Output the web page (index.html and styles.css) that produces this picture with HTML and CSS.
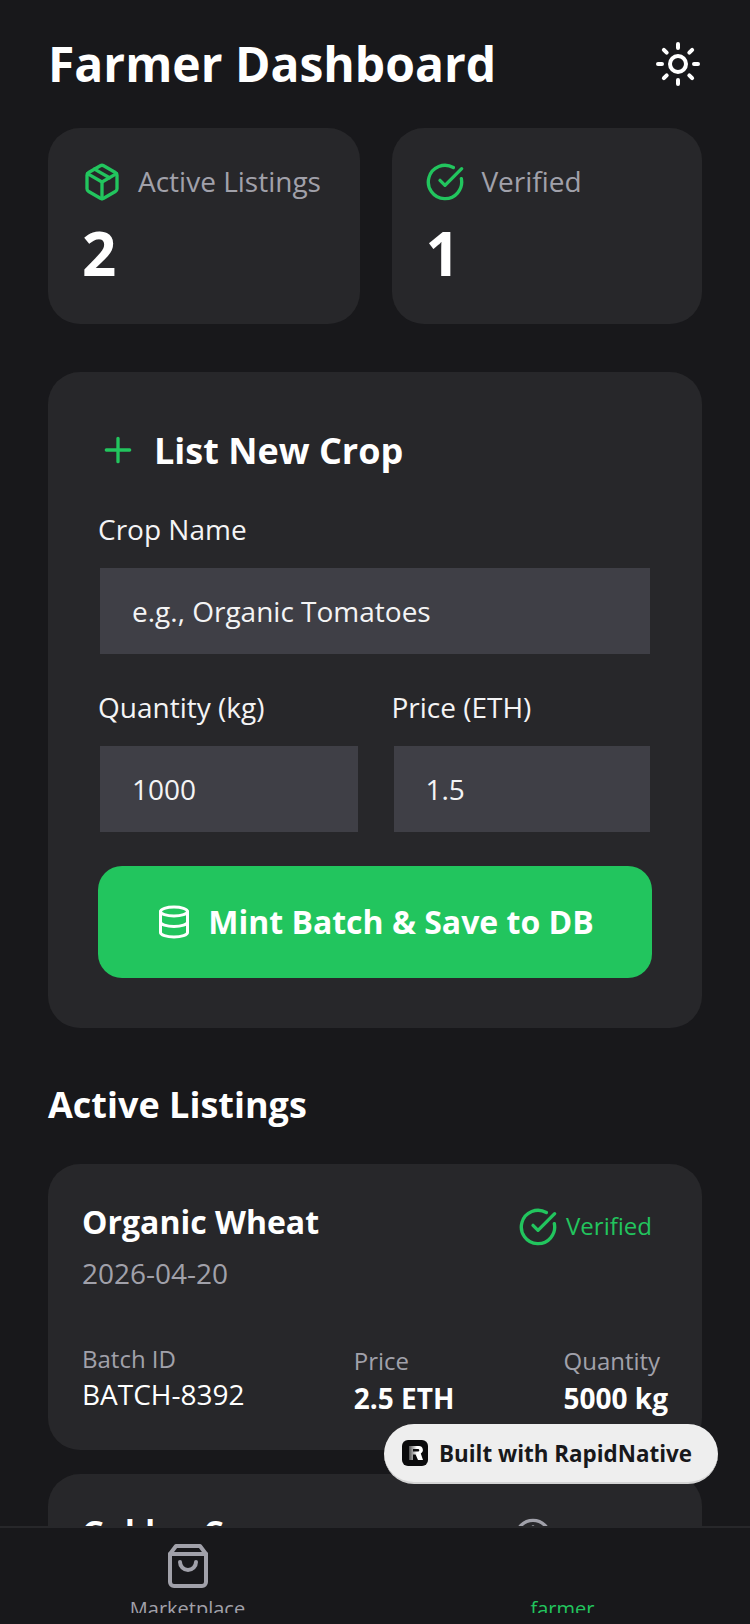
FILE: index.html
```html
<!DOCTYPE html>
<html lang="en">
<head>
<meta charset="utf-8">
<title>Farmer Dashboard</title>
<link rel="stylesheet" href="styles.css">
</head>
<body>
<div class="app">
  <main class="main">
    <header class="header">
      <h1 class="title">Farmer Dashboard</h1>
      <svg class="icon icon-48 stroke-white" viewBox="0 0 24 24"><circle cx="12" cy="12" r="4"/><path d="M12 2v2M12 20v2M4.93 4.93l1.41 1.41M17.66 17.66l1.41 1.41M2 12h2M20 12h2M6.34 17.66l-1.41 1.41M19.07 4.93l-1.41 1.41"/></svg>
    </header>

    <section class="stats">
      <div class="stat">
        <div class="stat-head">
          <svg class="icon icon-40 stroke-green" viewBox="0 0 24 24"><path d="M21 8a2 2 0 0 0-1-1.73l-7-4a2 2 0 0 0-2 0l-7 4A2 2 0 0 0 3 8v8a2 2 0 0 0 1 1.73l7 4a2 2 0 0 0 2 0l7-4A2 2 0 0 0 21 16Z"/><path d="M12 22V12"/><path d="m3.3 7 8.7 5 8.7-5"/><path d="m7.5 4.27 9 5.15"/></svg>
          <span class="stat-label">Active Listings</span>
        </div>
        <div class="stat-value">2</div>
      </div>
      <div class="stat">
        <div class="stat-head">
          <svg class="icon icon-40 stroke-green" viewBox="0 0 24 24"><path d="M21.8 10A10 10 0 1 1 17 3.34"/><path d="m9 11 3 3L22 4"/></svg>
          <span class="stat-label">Verified</span>
        </div>
        <div class="stat-value">1</div>
      </div>
    </section>

    <section class="form-card">
      <div class="form-head">
        <svg class="icon icon-40 stroke-green" viewBox="0 0 24 24"><path d="M5 12h14M12 5v14"/></svg>
        <h2 class="form-title">List New Crop</h2>
      </div>
      <label class="field">
        <span class="field-label">Crop Name</span>
        <input class="input" type="text" placeholder="e.g., Organic Tomatoes">
      </label>
      <div class="field-row">
        <label class="field">
          <span class="field-label">Quantity (kg)</span>
          <input class="input" type="text" value="1000">
        </label>
        <label class="field">
          <span class="field-label">Price (ETH)</span>
          <input class="input" type="text" value="1.5">
        </label>
      </div>
      <button class="submit" type="button">
        <svg class="icon icon-36 stroke-white" viewBox="0 0 24 24"><ellipse cx="12" cy="5" rx="9" ry="3"/><path d="M3 5v14a9 3 0 0 0 18 0V5"/><path d="M3 12a9 3 0 0 0 18 0"/></svg>
        <span class="submit-text">Mint Batch &amp; Save to DB</span>
      </button>
    </section>

    <h2 class="section-title">Active Listings</h2>

    <article class="listing">
      <div class="listing-head">
        <div>
          <h3 class="listing-name">Organic Wheat</h3>
          <p class="listing-date">2026-04-20</p>
        </div>
        <div class="badge badge-green">
          <svg class="icon icon-40 stroke-green" viewBox="0 0 24 24"><path d="M21.8 10A10 10 0 1 1 17 3.34"/><path d="m9 11 3 3L22 4"/></svg>
          <span class="badge-text">Verified</span>
        </div>
      </div>
      <div class="metrics">
        <div class="metric">
          <div class="metric-label">Batch ID</div>
          <div class="metric-id">BATCH-8392</div>
        </div>
        <div class="metric metric-low">
          <div class="metric-label">Price</div>
          <div class="metric-value">2.5 ETH</div>
        </div>
        <div class="metric metric-low">
          <div class="metric-label">Quantity</div>
          <div class="metric-value">5000 kg</div>
        </div>
      </div>
    </article>

    <article class="listing">
      <div class="listing-head">
        <div>
          <h3 class="listing-name">Golden Corn</h3>
          <p class="listing-date">2026-04-18</p>
        </div>
        <div class="badge badge-grey">
          <svg class="icon icon-40 stroke-grey" viewBox="0 0 24 24"><circle cx="12" cy="12" r="10"/><path d="M12 6v6l4 2"/></svg>
          <span class="badge-text">Pending</span>
        </div>
      </div>
    </article>
  </main>

  <nav class="tabbar">
    <div class="tab">
      <svg class="icon icon-48 stroke-grey" viewBox="0 0 24 24"><path d="M6 2 3 6v14a2 2 0 0 0 2 2h14a2 2 0 0 0 2-2V6l-3-4Z"/><path d="M3 6h18"/><path d="M16 10a4 4 0 0 1-8 0"/></svg>
      <span class="tab-label">Marketplace</span>
    </div>
    <div class="tab">
      <span class="tab-spacer"></span>
      <span class="tab-label tab-label-active">farmer</span>
    </div>
  </nav>

  <div class="built">
    <svg class="built-logo" viewBox="0 0 26 26"><defs><linearGradient id="rfade" gradientUnits="userSpaceOnUse" x1="6" y1="0" x2="15" y2="0"><stop offset="0" stop-color="#3a3a3a"/><stop offset="1" stop-color="#fff"/></linearGradient></defs><rect width="26" height="26" rx="6" fill="#0b0b0c"/><path d="M7 6h10a4 4 0 0 1 1.8 7.5L21 20h-5l-2.4-5.6H11v5.6H7Zm4 3v2.6h5a1.3 1.3 0 0 0 0-2.6Z" fill="url(#rfade)" fill-rule="evenodd"/></svg>
    <span>Built with RapidNative</span>
  </div>
</div>
</body>
</html>
```
FILE: styles.css
```css
* { box-sizing: border-box; }

html, body {
  margin: 0;
  padding: 0;
  background: #18181b;
}

body {
  font-family: "Open Sans", "Liberation Sans", sans-serif;
  color: #fff;
}

h1, h2, h3, p { margin: 0; }

.app {
  position: relative;
  display: flex;
  flex-direction: column;
  height: 100vh;
  overflow: hidden;
}

.main {
  flex: 1;
  min-height: 0;
  overflow: hidden;
  padding: 0 48px;
}

.icon {
  flex: none;
  display: block;
  fill: none;
  stroke-width: 2;
  stroke-linecap: round;
  stroke-linejoin: round;
}
.icon-48 { width: 48px; height: 48px; }
.icon-40 { width: 40px; height: 40px; }
.icon-36 { width: 36px; height: 36px; }
.stroke-white { stroke: #fff; }
.stroke-green { stroke: #22c55e; }
.stroke-grey { stroke: #a1a1aa; }

.header {
  display: flex;
  align-items: center;
  justify-content: space-between;
  height: 128px;
}
.title {
  font-size: 48px;
  line-height: 64px;
  font-weight: 700;
}

.stats {
  display: grid;
  grid-template-columns: 311.5fr 310.5fr;
  gap: 32px;
}
.stat {
  height: 196px;
  padding: 34px;
  background: #27272a;
  border-radius: 32px;
}
.stat + .stat { padding-left: 33.9px; }
.stat-head {
  display: flex;
  align-items: center;
  gap: 16px;
}
.stat-label {
  padding-bottom: 2px;
  font-size: 28px;
  line-height: 38px;
  color: #a1a1aa;
  white-space: nowrap;
}
.stat-value {
  margin-top: 15px;
  font-size: 60px;
  line-height: 72px;
  font-weight: 700;
}

.form-card {
  margin-top: 48px;
  padding: 50px;
  background: #27272a;
  border-radius: 32px;
}
.form-head {
  display: flex;
  align-items: center;
  gap: 16px;
  height: 56px;
}
.form-title {
  padding-top: 2px;
  font-size: 36px;
  line-height: 56px;
  font-weight: 700;
}
.field {
  display: block;
  margin-top: 32px;
}
.field-label {
  display: block;
  font-size: 28px;
  line-height: 38px;
  color: #f4f4f5;
}
.input {
  display: block;
  width: 100%;
  height: 90px;
  margin-top: 18px;
  padding: 0 32px;
  border: 2px solid #27272a;
  border-radius: 0;
  outline: none;
  background: #3f3f46;
  font-family: inherit;
  font-size: 28px;
  color: #f4f4f5;
}
.input::placeholder {
  color: #f4f4f5;
  opacity: 1;
}
.field-row {
  display: grid;
  grid-template-columns: 261.5fr 260.5fr;
  gap: 32px;
}
.field + .field .field-label { margin-left: -0.1px; }
.field + .field .input { padding-left: 31.9px; }
.submit {
  display: flex;
  align-items: center;
  justify-content: center;
  gap: 16px;
  width: 100%;
  height: 112px;
  margin-top: 32px;
  border: 0;
  border-radius: 24px;
  background: #22c55e;
  font-family: inherit;
  font-size: 32px;
  font-weight: 700;
  color: #fff;
}
.submit-text { padding-bottom: 2px; }

.section-title {
  margin: 51px 0 33px;
  font-size: 36px;
  line-height: 52px;
  font-weight: 700;
}

.listing {
  padding: 34px 34px 33px;
  margin-bottom: 24px;
  background: #27272a;
  border-radius: 32px;
}
.listing-head {
  display: flex;
  align-items: flex-start;
  justify-content: space-between;
}
.listing-name {
  padding-top: 2px;
  font-size: 32px;
  line-height: 44px;
  font-weight: 700;
}
.listing-date {
  margin-top: 10px;
  font-size: 28px;
  line-height: 38px;
  color: #a1a1aa;
}
.badge {
  display: flex;
  align-items: center;
  gap: 8px;
  padding: 8px 16px;
  font-size: 24px;
  line-height: 40px;
}
.badge-text { padding-bottom: 2px; }
.badge-green { color: #22c55e; }
.badge-grey { color: #a1a1aa; }

.metrics {
  display: flex;
  justify-content: space-between;
  margin-top: 50px;
}
.metric-low { margin-top: 2px; }
.metric-label {
  font-size: 24px;
  line-height: 33px;
  color: #a1a1aa;
}
.metric-id {
  font-size: 28px;
  line-height: 38px;
}
.metric-value {
  margin-top: 2px;
  font-size: 28px;
  line-height: 38px;
  font-weight: 700;
}

.tabbar {
  flex: none;
  display: grid;
  grid-template-columns: 1fr 1fr;
  height: 98px;
  background: #18181b;
  border-top: 2px solid #27272a;
}
.tab {
  display: flex;
  flex-direction: column;
  align-items: center;
  height: 85px;
  padding-top: 14px;
  overflow: hidden;
}
.tab-spacer {
  flex: none;
  height: 48px;
}
.tab-label {
  margin-top: 5px;
  font-size: 20px;
  line-height: 27px;
  color: #a1a1aa;
}
.tab-label-active { color: #22c55e; }

.built {
  position: absolute;
  left: 384px;
  top: 1424px;
  display: flex;
  align-items: center;
  gap: 11px;
  width: 334px;
  height: 60px;
  padding-left: 18px;
  border-radius: 30px;
  background: #eeeeee;
  border-bottom: 2px solid #d4d4d4;
  font-size: 22.4px;
  font-weight: 700;
  color: #18181b;
  white-space: nowrap;
}
.built-logo {
  flex: none;
  width: 26px;
  height: 26px;
}
```
